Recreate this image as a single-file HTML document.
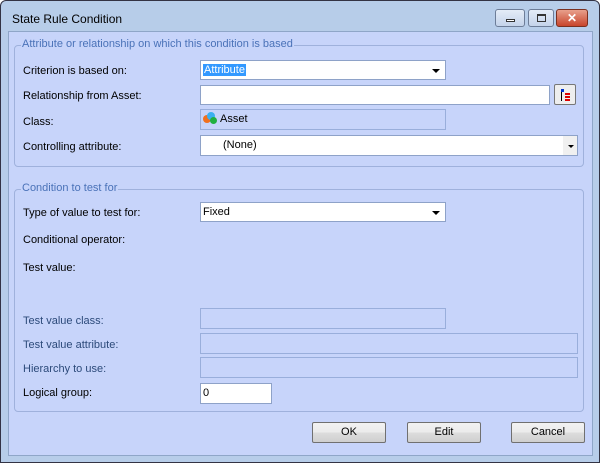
<!DOCTYPE html>
<html><head><style>
*{box-sizing:border-box;margin:0;padding:0}
body{width:600px;height:463px;background:#fff;font-family:"Liberation Sans",sans-serif;font-size:11px;position:relative;overflow:hidden}
.win{position:absolute;left:0;top:0;width:600px;height:463px;border:1px solid #334;background:#b7cde9;border-radius:6px 6px 0 0}
.title{position:absolute;left:11px;top:11px;font-size:12px;color:#000}
.client{position:absolute;left:7px;top:30px;width:585px;height:425px;background:#c7d4fa;border:1px solid #8fa6c8}
.grp{position:absolute;border:1px solid #9fb1dc;border-radius:4px}
.gl{position:absolute;top:-8px;left:6px;background:#c7d4fa;color:#4a72b8;padding:0 1px;font-size:11px}
.lbl{position:absolute;color:#000;font-size:11px}
.dis{color:#2c4a7a}
.box{position:absolute;background:#fff;border:1px solid #8ea2c8;height:20px;font-size:11px;padding:3px 2px}
.dbox{position:absolute;border:1px solid #99aedb;height:21px}
.arr{position:absolute;right:5px;top:8px;width:0;height:0;border-left:4px solid transparent;border-right:4px solid transparent;border-top:4px solid #000}
.btn{position:absolute;top:421px;width:74px;height:21px;border:1px solid #707070;border-radius:2px;background:linear-gradient(#f2f2f2,#ebebeb 50%,#dddddd 50%,#cfcfcf);text-align:center;line-height:19px;font-size:11px}
.tb{position:absolute;top:8px;height:18px;border:1px solid #6d7d98;border-radius:3px;background:linear-gradient(#e4ecf7,#c4d3ea)}
</style></head><body>
<div class="win">
<div class="title">State Rule Condition</div>
<div class="tb" style="left:494px;width:30px"><div style="position:absolute;left:10px;top:9px;width:9px;height:3px;border:1px solid #333;background:#fff"></div></div>
<div class="tb" style="left:527px;width:26px"><div style="position:absolute;left:8px;top:4px;width:9px;height:8px;border:1px solid #333;border-top-width:2px"></div></div>
<div class="tb" style="left:555px;width:32px;background:linear-gradient(#e8a08c,#c8452c);border-color:#7a3020"><div style="position:absolute;left:0;width:30px;top:0;text-align:center;color:#fff;font-weight:bold;font-size:12px;line-height:16px">✕</div></div>
<div class="client"></div>
<div class="grp" style="left:13px;top:44px;width:570px;height:122px"><div class="gl">Attribute or relationship on which this condition is based</div></div>
<div class="grp" style="left:13px;top:188px;width:570px;height:223px"><div class="gl">Condition to test for</div></div>

<div class="lbl" style="left:22px;top:64px">Criterion is based on:</div>
<div class="box" style="left:199px;top:59px;width:246px;height:20px"><span style="background:#3399ff;color:#fff;padding:0 1px">Attribute</span><div class="arr"></div></div>
<div class="lbl" style="left:22px;top:89px">Relationship from Asset:</div>
<div class="box" style="left:199px;top:84px;width:350px"></div>
<div style="position:absolute;left:553px;top:83px;width:22px;height:21px;border:1px solid #777;border-radius:2px;background:#eee">
<div style="position:absolute;left:6px;top:4px;width:3px;height:3px;background:#0033cc"></div>
<div style="position:absolute;left:6px;top:7px;width:1px;height:9px;background:#000"></div>
<div style="position:absolute;left:10px;top:8px;width:5px;height:2px;background:#d00"></div>
<div style="position:absolute;left:10px;top:11px;width:5px;height:2px;background:#d00"></div>
<div style="position:absolute;left:10px;top:14px;width:5px;height:2px;background:#d00"></div></div>
<div class="lbl" style="left:22px;top:115px">Class:</div>
<div class="dbox" style="left:199px;top:108px;width:246px"><span style="position:absolute;left:2px;top:5px;width:8px;height:8px;border-radius:50%;background:#f07020"></span><span style="position:absolute;left:6px;top:2px;width:8px;height:8px;border-radius:50%;background:#3ab0f0"></span><span style="position:absolute;left:9px;top:7px;width:7px;height:7px;border-radius:50%;background:#20b040"></span><span style="position:absolute;left:19px;top:3px">Asset</span></div>
<div class="lbl" style="left:22px;top:140px">Controlling attribute:</div>
<div class="box" style="left:199px;top:134px;width:378px;height:21px;padding-left:22px">(None)<div style="position:absolute;right:0;top:0;width:14px;height:19px;background:#f0f0f0"></div><div class="arr" style="right:3px;top:9px;border-width:3px 3px 0"></div></div>

<div class="lbl" style="left:22px;top:206px">Type of value to test for:</div>
<div class="box" style="left:199px;top:201px;width:246px">Fixed<div class="arr"></div></div>
<div class="lbl" style="left:22px;top:233px">Conditional operator:</div>
<div class="lbl" style="left:22px;top:261px">Test value:</div>
<div class="lbl dis" style="left:22px;top:314px">Test value class:</div>
<div class="dbox" style="left:199px;top:307px;width:246px"></div>
<div class="lbl dis" style="left:22px;top:338px">Test value attribute:</div>
<div class="dbox" style="left:199px;top:332px;width:378px"></div>
<div class="lbl dis" style="left:22px;top:362px">Hierarchy to use:</div>
<div class="dbox" style="left:199px;top:356px;width:378px"></div>
<div class="lbl" style="left:22px;top:386px">Logical group:</div>
<div class="box" style="left:199px;top:382px;width:72px;height:21px">0</div>

<div class="btn" style="left:311px">OK</div>
<div class="btn" style="left:406px">Edit</div>
<div class="btn" style="left:510px">Cancel</div>
</div>
</body></html>
